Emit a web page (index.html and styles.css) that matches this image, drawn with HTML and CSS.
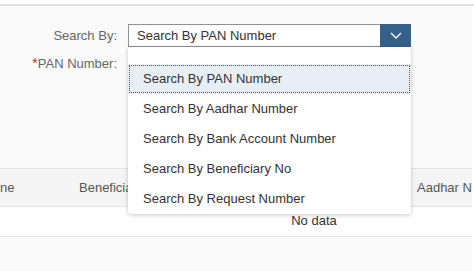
FILE: index.html
```html
<!DOCTYPE html>
<html>
<head>
<meta charset="utf-8">
<link rel="stylesheet" href="styles.css">
</head>
<body>
<div class="page">
  <div class="topbar"></div>
  <div class="main">
    <div class="form">
      <div class="row">
        <label class="lbl">Search By:</label>
        <div class="select-wrap">
          <div class="select">
            <span class="select-text">Search By PAN Number</span>
            <span class="select-btn">
              <svg width="12" height="7" viewBox="0 0 12 7"><path d="M1 1 L6 6 L11 1" fill="none" stroke="#fff" stroke-width="1.4"/></svg>
            </span>
          </div>
          <ul class="popover">
            <li class="item active">Search By PAN Number</li>
            <li class="item">Search By Aadhar Number</li>
            <li class="item">Search By Bank Account Number</li>
            <li class="item">Search By Beneficiary No</li>
            <li class="item">Search By Request Number</li>
          </ul>
        </div>
      </div>
      <div class="row">
        <label class="lbl"><span class="req">*</span>PAN Number:</label>
      </div>
    </div>
    <div class="table">
      <div class="thead">
        <div class="th c1">ne</div>
        <div class="th c2">Beneficiary Name</div>
        <div class="th c3">Aadhar Number</div>
      </div>
      <div class="nodata">No data</div>
    </div>
  </div>
</div>
</body>
</html>
```
FILE: styles.css
```css
* { box-sizing: border-box; }
html, body { margin: 0; padding: 0; }
body {
  width: 474px;
  height: 271px;
  overflow: hidden;
  background: #fff;
  font-family: "Liberation Sans", Arial, sans-serif;
  font-size: 13px;
}
.page { width: 474px; }
.topbar {
  height: 6px;
  border-bottom: 2px solid #e2e2e2;
  background: #fff;
}
.main {
  width: 472px;
  height: 265px;
  background: #fafafa;
  overflow: hidden;
}
.form {
  height: 162px;
  padding-top: 18px;
}
.row {
  display: flex;
  align-items: center;
  height: 23px;
  margin-bottom: 5px;
}
.lbl {
  width: 117px;
  text-align: right;
  color: #666;
  flex: none;
}
.req { color: #c0392b; font-size: 15px; line-height: 10px; }
.select-wrap {
  position: relative;
  margin-left: 11px;
  width: 283px;
}
.select {
  display: flex;
  height: 23px;
  border: 1px solid #8c9196;
  background: #fff;
}
.select-text {
  flex: 1;
  padding-left: 8px;
  line-height: 21px;
  color: #333;
}
.select-btn {
  width: 31px;
  margin: -1px -1px -1px 0;
  background: #346089;
  display: flex;
  align-items: center;
  justify-content: center;
}
.popover {
  position: absolute;
  left: 0;
  top: 23px;
  width: 283px;
  margin: 0;
  padding: 17px 0 0;
  list-style: none;
  background: #fff;
  border-radius: 0 0 3px 3px;
  box-shadow: 0 1px 4px rgba(0,0,0,0.22);
  z-index: 5;
}
.item {
  height: 30px;
  line-height: 30px;
  padding-left: 15px;
  color: #333;
}
.item.active {
  background: #e8eef6;
  outline: 1px dotted #555;
  outline-offset: -2px;
}
.table {
  width: 472px;
}
.thead {
  display: flex;
  height: 39px;
  align-items: center;
  background: #f5f5f5;
  border-top: 1px solid #e3e3e3;
  border-bottom: 1px solid #e3e3e3;
  color: #555;
  white-space: nowrap;
  overflow: hidden;
}
.th { flex: none; overflow: hidden; }
.c1 { width: 79px; }
.c2 { width: 338px; }
.c3 { width: 80px; }
.nodata {
  height: 30px;
  line-height: 28px;
  background: #fff;
  border-bottom: 1px solid #e3e3e3;
  text-align: center;
  padding-left: 156px;
  color: #333;
}
```
